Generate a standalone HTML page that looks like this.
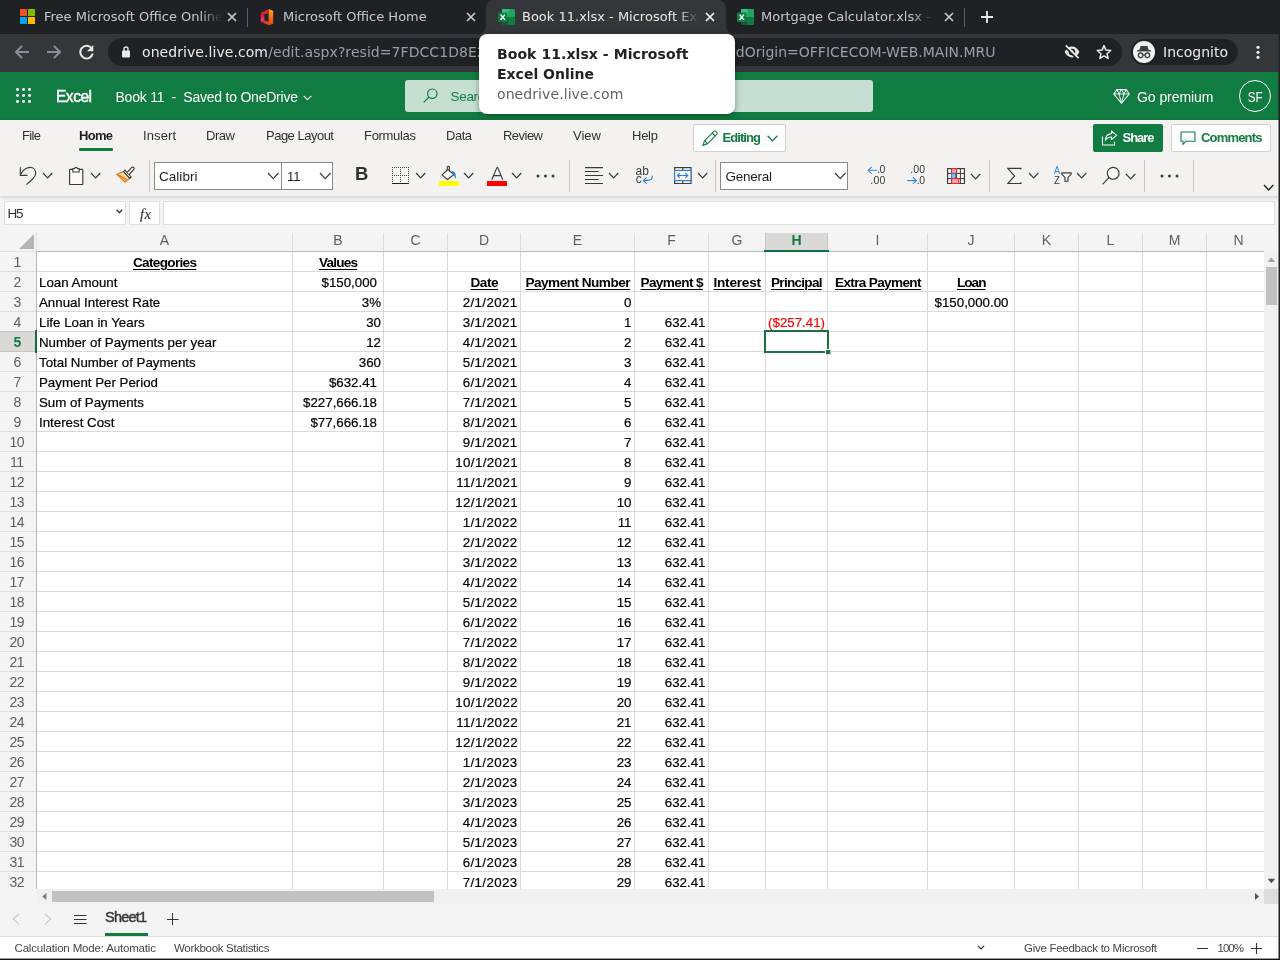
<!DOCTYPE html>
<html lang="en"><head><meta charset="utf-8"><title>Book 11.xlsx - Microsoft Excel Online</title>
<style>
html,body{margin:0;padding:0;}
body{width:1280px;height:960px;overflow:hidden;position:relative;background:#f4f4f4;font-family:"Liberation Sans",sans-serif;}
#root{position:absolute;left:0;top:0;width:1280px;height:960px;overflow:hidden;will-change:transform;}
.b{position:absolute;box-sizing:border-box;display:block;}
.t{position:absolute;white-space:pre;}
.clip{position:absolute;overflow:hidden;}
.c{-webkit-text-stroke:0.2px currentColor;}
</style></head>
<body>
<div id="root">
<div class="b" style="left:0px;top:0px;width:1280px;height:34px;background:#202124;"></div>
<div class="b" style="left:0px;top:34px;width:1280px;height:38px;background:#35363a;"></div>
<div class="b" style="left:486px;top:0px;width:240px;height:34px;background:#35363a;border-radius:8px 8px 0 0;"></div>
<svg class="b" style="left:478px;top:26px;" width="8" height="8" viewBox="0 0 8 8" fill="none"><path d="M8 0V8H0A8 8 0 0 0 8 0Z" fill="#35363a"/></svg>
<svg class="b" style="left:726px;top:26px;" width="8" height="8" viewBox="0 0 8 8" fill="none"><path d="M0 0V8H8A8 8 0 0 1 0 0Z" fill="#35363a"/></svg>
<div class="b" style="left:247px;top:8px;width:1px;height:19px;background:#5f6368;"></div>
<div class="b" style="left:964px;top:8px;width:1px;height:19px;background:#5f6368;"></div>
<div class="clip" style="left:44px;top:0;width:178px;height:34px;-webkit-mask-image:linear-gradient(to right,#000 156px,transparent 178px);mask-image:linear-gradient(to right,#000 156px,transparent 178px);">
<span class="t" style="left:0.00px;top:7.50px;font:400 13px/18px 'DejaVu Sans', 'Liberation Sans', sans-serif;color:#c6c9cc;">Free Microsoft Office Online</span>
</div>
<div class="clip" style="left:283px;top:0;width:177px;height:34px;-webkit-mask-image:linear-gradient(to right,#000 155px,transparent 177px);mask-image:linear-gradient(to right,#000 155px,transparent 177px);">
<span class="t" style="left:0.00px;top:7.50px;font:400 13px/18px 'DejaVu Sans', 'Liberation Sans', sans-serif;color:#c6c9cc;">Microsoft Office Home</span>
</div>
<div class="clip" style="left:522px;top:0;width:177px;height:34px;-webkit-mask-image:linear-gradient(to right,#000 155px,transparent 177px);mask-image:linear-gradient(to right,#000 155px,transparent 177px);">
<span class="t" style="left:0.00px;top:7.50px;font:400 13px/18px 'DejaVu Sans', 'Liberation Sans', sans-serif;color:#e8eaed;">Book 11.xlsx - Microsoft Excel Online</span>
</div>
<div class="clip" style="left:761px;top:0;width:173px;height:34px;-webkit-mask-image:linear-gradient(to right,#000 151px,transparent 173px);mask-image:linear-gradient(to right,#000 151px,transparent 173px);">
<span class="t" style="left:0.00px;top:7.50px;font:400 13px/18px 'DejaVu Sans', 'Liberation Sans', sans-serif;color:#c6c9cc;">Mortgage Calculator.xlsx - Microsoft Excel Online</span>
</div>
<svg class="b" style="left:227px;top:12px;" width="10" height="10" viewBox="0 0 10 10" fill="none"><path d="M1 1L9 9M9 1L1 9" stroke="#c6c9cc" stroke-width="1.7"/></svg>
<svg class="b" style="left:466px;top:12px;" width="10" height="10" viewBox="0 0 10 10" fill="none"><path d="M1 1L9 9M9 1L1 9" stroke="#c6c9cc" stroke-width="1.7"/></svg>
<svg class="b" style="left:705px;top:12px;" width="10" height="10" viewBox="0 0 10 10" fill="none"><path d="M1 1L9 9M9 1L1 9" stroke="#f1f3f4" stroke-width="1.7"/></svg>
<svg class="b" style="left:944px;top:12px;" width="10" height="10" viewBox="0 0 10 10" fill="none"><path d="M1 1L9 9M9 1L1 9" stroke="#c6c9cc" stroke-width="1.7"/></svg>
<svg class="b" style="left:981px;top:11px;" width="12" height="12" viewBox="0 0 12 12" fill="none"><path d="M6 0V12M0 6H12" stroke="#e8eaed" stroke-width="1.8"/></svg>
<svg class="b" style="left:20px;top:9px;" width="15" height="15" viewBox="0 0 15 15" fill="none"><rect x="0" y="0" width="7" height="7" fill="#f25022"/><rect x="8" y="0" width="7" height="7" fill="#7fba00"/><rect x="0" y="8" width="7" height="7" fill="#00a4ef"/><rect x="8" y="8" width="7" height="7" fill="#ffb900"/></svg>
<svg class="b" style="left:260px;top:8.5px;" width="14" height="17" viewBox="0 0 14 17" fill="none"><defs><linearGradient id="og1" x1="0" y1="0" x2="0" y2="1"><stop offset="0" stop-color="#ffa21f"/><stop offset="1" stop-color="#e8401c"/></linearGradient><linearGradient id="og2" x1="0" y1="0" x2="0" y2="1"><stop offset="0" stop-color="#b81a1a"/><stop offset="0.6" stop-color="#d4204a"/><stop offset="1" stop-color="#e65bb0"/></linearGradient><linearGradient id="og3" x1="0" y1="0" x2="1" y2="0"><stop offset="0" stop-color="#c4161c"/><stop offset="1" stop-color="#f0501e"/></linearGradient></defs><path d="M8.6 0.4L1.4 3.6C0.9 3.8 0.7 4.2 0.7 4.7V11.7C0.7 12.3 1 12.6 1.5 12.4L4.4 11.2V5.2L8.6 3.8Z" fill="url(#og2)"/><path d="M8.6 0.4C9 0.2 9.4 0.2 9.8 0.4L12.6 1.6C13 1.8 13.2 2.1 13.2 2.6V13.9C13.2 14.4 13 14.7 12.6 14.9L9.8 16.1C9.4 16.3 9 16.3 8.6 16.1Z" fill="url(#og1)"/><path d="M1.5 12.4C1 12.8 1.2 13.3 1.7 13.5L8.6 16.1V12.5L4.4 11.2Z" fill="url(#og3)"/><path d="M8.6 0.4L1.4 3.6L4.4 5.2L8.6 3.8Z" fill="#d9281e"/></svg>
<svg class="b" style="left:498px;top:9px;" width="17" height="16" viewBox="0 0 17 16" fill="none"><rect x="4" y="0" width="13" height="16" rx="1.2" fill="#21a366"/><rect x="4" y="0" width="6.5" height="8" fill="#33c481"/><rect x="10.5" y="8" width="6.5" height="8" fill="#107c41"/><rect x="4" y="8" width="6.5" height="8" fill="#185c37"/><rect x="0" y="3.5" width="9.5" height="9.5" rx="1" fill="#107c41"/><path d="M2.6 5.6L6.9 10.9M6.9 5.6L2.6 10.9" stroke="#fff" stroke-width="1.5"/></svg>
<svg class="b" style="left:737px;top:9px;" width="17" height="16" viewBox="0 0 17 16" fill="none"><rect x="4" y="0" width="13" height="16" rx="1.2" fill="#21a366"/><rect x="4" y="0" width="6.5" height="8" fill="#33c481"/><rect x="10.5" y="8" width="6.5" height="8" fill="#107c41"/><rect x="4" y="8" width="6.5" height="8" fill="#185c37"/><rect x="0" y="3.5" width="9.5" height="9.5" rx="1" fill="#107c41"/><path d="M2.6 5.6L6.9 10.9M6.9 5.6L2.6 10.9" stroke="#fff" stroke-width="1.5"/></svg>
<svg class="b" style="left:14px;top:45px;" width="16" height="14" viewBox="0 0 16 14" fill="none"><path d="M15 7H2M8 1L2 7L8 13" stroke="#8b8e92" stroke-width="2"/></svg>
<svg class="b" style="left:46px;top:45px;" width="16" height="14" viewBox="0 0 16 14" fill="none"><path d="M1 7H14M8 1L14 7L8 13" stroke="#8b8e92" stroke-width="2"/></svg>
<svg class="b" style="left:78px;top:44px;" width="17" height="16" viewBox="0 0 17 16" fill="none"><path d="M13.6 4.2A6.3 6.3 0 1 0 14.8 9.5" stroke="#e8eaed" stroke-width="2"/><path d="M15.3 1V7.3H9Z" fill="#e8eaed"/></svg>
<div class="b" style="left:108px;top:38px;width:1014px;height:28px;background:#202124;border-radius:14px;"></div>
<svg class="b" style="left:122px;top:45.6px;" width="8" height="12" viewBox="0 0 8 12" fill="none"><rect x="0" y="4.6" width="8" height="6.8" rx="0.8" fill="#e8eaed"/><path d="M2 5V3A2 2 0 0 1 6 3V5" stroke="#e8eaed" stroke-width="1.4"/></svg>
<div class="clip" style="left:142px;top:38px;width:340px;height:28px;">
<span class="t" style="left:0.00px;top:4.16px;font:400 14px/20px 'DejaVu Sans', 'Liberation Sans', sans-serif;color:#e8eaed;letter-spacing:0.064px;">onedrive.live.com</span>
<span class="t" style="left:126.20px;top:4.16px;font:400 14px/20px 'DejaVu Sans', 'Liberation Sans', sans-serif;color:#9a9fa5;letter-spacing:0.06px;">/edit.aspx?resid=7FDCC1D8E2A4B6F3%21121&amp;cid=7FDCC1D8E2A4B6F3</span>
</div>
<div class="clip" style="left:700px;top:38px;width:300px;height:28px;">
<span class="t" style="left:-72.62px;top:4.16px;font:400 14px/20px 'DejaVu Sans', 'Liberation Sans', sans-serif;color:#9aa0a6;">&amp;app=Excel&amp;wdOrigin=OFFICECOM-WEB.MAIN.MRU</span>
</div>
<svg class="b" style="left:1064px;top:45px;" width="16" height="14" viewBox="0 0 16 14" fill="none"><path d="M0.6 7C2.6 3.3 5.3 1.6 8 1.6S13.4 3.3 15.4 7C13.4 10.7 10.7 12.4 8 12.4S2.6 10.7 0.6 7Z" fill="#e8eaed"/><circle cx="8" cy="7" r="3.3" fill="#202124"/><circle cx="8" cy="7" r="1.7" fill="#e8eaed"/><path d="M0.8 1.6L13.4 14.2" stroke="#202124" stroke-width="2"/><path d="M1.8 0.4L14.6 13.2" stroke="#e8eaed" stroke-width="1.7"/></svg>
<svg class="b" style="left:1096px;top:44px;" width="16" height="16" viewBox="0 0 16 16" fill="none"><path d="M8 1.6L9.9 6.1L14.7 6.5L11 9.7L12.1 14.4L8 11.9L3.9 14.4L5 9.7L1.3 6.5L6.1 6.1Z" stroke="#e8eaed" stroke-width="1.5" stroke-linejoin="round"/></svg>
<div class="b" style="left:1131px;top:39px;width:107px;height:26px;background:#202124;border-radius:13px;"></div>
<svg class="b" style="left:1133px;top:41px;" width="22" height="22" viewBox="0 0 22 22" fill="none"><circle cx="11" cy="11" r="11" fill="#f1f3f4"/><path d="M6.2 9.2L7.6 4.9H14.4L15.8 9.2Z" fill="#3c4043"/><rect x="4.2" y="9" width="13.6" height="1.5" fill="#3c4043"/><circle cx="7.6" cy="14.3" r="2.3" stroke="#3c4043" stroke-width="1.3"/><circle cx="14.4" cy="14.3" r="2.3" stroke="#3c4043" stroke-width="1.3"/><path d="M9.8 14H12.2" stroke="#3c4043" stroke-width="1.2"/></svg>
<span class="t" style="left:1163.00px;top:42.16px;font:400 14px/20px 'DejaVu Sans', 'Liberation Sans', sans-serif;color:#e8eaed;">Incognito</span>
<svg class="b" style="left:1255.5px;top:45px;" width="4" height="16" viewBox="0 0 4 16" fill="none"><circle cx="2" cy="2.3" r="1.6" fill="#e8eaed"/><circle cx="2" cy="7.3" r="1.6" fill="#e8eaed"/><circle cx="2" cy="12.3" r="1.6" fill="#e8eaed"/></svg>
<div class="b" style="left:0px;top:72px;width:1280px;height:48px;background:#107c41;"></div>
<svg class="b" style="left:16px;top:88px;" width="15" height="15" viewBox="0 0 15 15" fill="none"><rect x="0" y="0" width="3" height="3" rx="1.4" fill="#fff"/><rect x="0" y="6" width="3" height="3" rx="1.4" fill="#fff"/><rect x="0" y="12" width="3" height="3" rx="1.4" fill="#fff"/><rect x="6" y="0" width="3" height="3" rx="1.4" fill="#fff"/><rect x="6" y="6" width="3" height="3" rx="1.4" fill="#fff"/><rect x="6" y="12" width="3" height="3" rx="1.4" fill="#fff"/><rect x="12" y="0" width="3" height="3" rx="1.4" fill="#fff"/><rect x="12" y="6" width="3" height="3" rx="1.4" fill="#fff"/><rect x="12" y="12" width="3" height="3" rx="1.4" fill="#fff"/></svg>
<span class="t" style="left:56.00px;top:86.19px;font:400 15.6px/22px 'Liberation Sans', sans-serif;color:#fff;letter-spacing:-0.535px;-webkit-text-stroke:0.5px #fff;">Excel</span>
<span class="t" style="left:115.50px;top:87.15px;font:400 14px/20px 'Liberation Sans', sans-serif;color:#fff;letter-spacing:-0.227px;">Book 11  -  Saved to OneDrive</span>
<svg class="b" style="left:303px;top:94.6px;" width="9" height="6" viewBox="0 0 9 6" fill="none"><path d="M0.7 0.8L4.5 4.6L8.3 0.8" stroke="#fff" stroke-width="1.1"/></svg>
<div class="b" style="left:405px;top:80px;width:468px;height:32px;background:#c6dfd2;border-radius:3px;"></div>
<svg class="b" style="left:423px;top:88px;" width="15" height="15" viewBox="0 0 15 15" fill="none"><circle cx="9.3" cy="5.7" r="4.7" stroke="#107c41" stroke-width="1.2"/><path d="M6 9L0.7 14.3" stroke="#107c41" stroke-width="1.2"/></svg>
<span class="t" style="left:450.60px;top:86.82px;font:400 13.5px/19px 'Liberation Sans', sans-serif;color:#107c41;letter-spacing:-0.35px;">Search</span>
<svg class="b" style="left:1113px;top:89px;" width="17" height="15" viewBox="0 0 17 15" fill="none"><path d="M4 0.6H13L16.3 5L8.5 14.2L0.7 5Z" stroke="#fff" stroke-width="1.1" stroke-linejoin="round"/><path d="M0.7 5H16.3M4 0.6L6 5L8.5 14.2L11 5L13 0.6M8.5 0.6L6 5M8.5 0.6L11 5" stroke="#fff" stroke-width="0.9" stroke-linejoin="round"/></svg>
<span class="t" style="left:1137.00px;top:87.15px;font:400 14px/20px 'Liberation Sans', sans-serif;color:#fff;letter-spacing:-0.059px;">Go premium</span>
<div class="b" style="left:1239px;top:80px;width:32px;height:32px;border:1px solid #fff;border-radius:16px;"></div>
<span class="t" style="left:1246.03px;top:86.98px;font:400 14.5px/20px 'Liberation Sans', sans-serif;color:#fff;transform:scaleX(0.8);">SF</span>
<div class="b" style="left:479px;top:34px;width:256px;height:80px;background:#fff;border-radius:8px;box-shadow:0 2px 6px rgba(0,0,0,0.35);"></div>
<span class="t" style="left:497.00px;top:44.16px;font:700 14px/20px 'DejaVu Sans', 'Liberation Sans', sans-serif;color:#202124;letter-spacing:0.068px;">Book 11.xlsx - Microsoft</span>
<span class="t" style="left:497.00px;top:64.16px;font:700 14px/20px 'DejaVu Sans', 'Liberation Sans', sans-serif;color:#202124;">Excel Online</span>
<span class="t" style="left:497.00px;top:84.16px;font:400 14px/20px 'DejaVu Sans', 'Liberation Sans', sans-serif;color:#5f6368;letter-spacing:0.083px;">onedrive.live.com</span>
<div class="b" style="left:0px;top:120px;width:1280px;height:76px;background:#f3f2f1;box-shadow:0 1px 4px rgba(0,0,0,0.18);"></div>
<span class="t" style="left:22.00px;top:126.50px;font:400 13px/18px 'Liberation Sans', sans-serif;color:#323130;letter-spacing:-0.651px;">File</span>
<span class="t" style="left:79.00px;top:126.50px;font:700 13px/18px 'Liberation Sans', sans-serif;color:#201f1e;letter-spacing:-0.708px;">Home</span>
<span class="t" style="left:143.00px;top:126.50px;font:400 13px/18px 'Liberation Sans', sans-serif;color:#323130;letter-spacing:0.097px;">Insert</span>
<span class="t" style="left:206.00px;top:126.50px;font:400 13px/18px 'Liberation Sans', sans-serif;color:#323130;letter-spacing:-0.448px;">Draw</span>
<span class="t" style="left:266.00px;top:126.50px;font:400 13px/18px 'Liberation Sans', sans-serif;color:#323130;letter-spacing:-0.502px;">Page Layout</span>
<span class="t" style="left:364.00px;top:126.50px;font:400 13px/18px 'Liberation Sans', sans-serif;color:#323130;letter-spacing:-0.312px;">Formulas</span>
<span class="t" style="left:446.00px;top:126.50px;font:400 13px/18px 'Liberation Sans', sans-serif;color:#323130;letter-spacing:-0.490px;">Data</span>
<span class="t" style="left:503.00px;top:126.50px;font:400 13px/18px 'Liberation Sans', sans-serif;color:#323130;letter-spacing:-0.525px;">Review</span>
<span class="t" style="left:573.00px;top:126.50px;font:400 13px/18px 'Liberation Sans', sans-serif;color:#323130;letter-spacing:0.016px;">View</span>
<span class="t" style="left:632.00px;top:126.50px;font:400 13px/18px 'Liberation Sans', sans-serif;color:#323130;letter-spacing:-0.250px;">Help</span>
<div class="b" style="left:79px;top:148px;width:34px;height:3px;background:#107c41;border-radius:1px;"></div>
<div class="b" style="left:693px;top:124px;width:93px;height:28px;background:#fff;border:1px solid #d2d0ce;border-radius:2px;"></div>
<svg class="b" style="left:701px;top:130px;" width="18" height="17" viewBox="0 0 18 17" fill="none"><path d="M2.2 15L3.4 10.8L12.6 1.6A1.6 1.6 0 0 1 15 1.6L15.6 2.2A1.6 1.6 0 0 1 15.6 4.6L6.4 13.8Z" stroke="#107c41" stroke-width="1.1" stroke-linejoin="round"/><path d="M11.2 3L14.2 6M3.6 10.6L6.6 13.6M1 15.6L6 14" stroke="#107c41" stroke-width="1.1"/></svg>
<span class="t" style="left:722.50px;top:128.50px;font:700 13px/18px 'Liberation Sans', sans-serif;color:#107c41;letter-spacing:-0.924px;">Editing</span>
<svg class="b" style="left:767px;top:135px;" width="12" height="8" viewBox="0 0 12 8" fill="none"><path d="M0.6 0.7L5.5 5.9L10.4 0.7" stroke="#107c41" stroke-width="1.3"/></svg>
<div class="b" style="left:1093px;top:124px;width:70px;height:28px;background:#107c41;border-radius:2px;"></div>
<svg class="b" style="left:1101px;top:130px;" width="18" height="16" viewBox="0 0 18 16" fill="none"><path d="M1.5 6.5V15H13.5V11.5" stroke="#fff" stroke-width="1.1"/><path d="M10.5 1L15.5 5.3L10.5 9.6V7C7.5 7 5.7 8 4.3 10.3C4.6 6.7 6.6 4 10.5 3.6Z" stroke="#fff" stroke-width="1.1" stroke-linejoin="round"/></svg>
<span class="t" style="left:1122.50px;top:128.50px;font:700 13px/18px 'Liberation Sans', sans-serif;color:#fff;letter-spacing:-1.035px;">Share</span>
<div class="b" style="left:1171px;top:124px;width:100px;height:28px;background:#fff;border:1px solid #d2d0ce;border-radius:2px;"></div>
<svg class="b" style="left:1180px;top:131px;" width="16" height="15" viewBox="0 0 16 15" fill="none"><path d="M1 1H15V10.2H6L3 13.4V10.2H1Z" stroke="#107c41" stroke-width="1.1" stroke-linejoin="round"/></svg>
<span class="t" style="left:1201.00px;top:128.50px;font:700 13px/18px 'Liberation Sans', sans-serif;color:#107c41;letter-spacing:-0.812px;">Comments</span>
<svg class="b" style="left:19px;top:166px;" width="19" height="20" viewBox="0 0 19 20" fill="none"><path d="M1.35 1.3V9.3H8.5" stroke="#3b3a39" stroke-width="1.15"/><path d="M1.3 8.7C4 4 7.8 1.3 11.2 1.3C14.5 1.3 16.7 4 16.7 7.3C16.7 10 15.2 11.4 13.6 13L7.4 18.6" stroke="#3b3a39" stroke-width="1.15"/></svg>
<svg class="b" style="left:41.8px;top:171.8px;" width="11.3" height="7.9" viewBox="0 0 11.3 7.9" fill="none"><path d="M1 1L5.65 6.00L10.30 1" stroke="#3b3a39" stroke-width="1.15"/></svg>
<svg class="b" style="left:68px;top:166px;" width="16" height="20" viewBox="0 0 16 20" fill="none"><rect x="1.6" y="3.3" width="13.2" height="15.2" rx="0.6" fill="#faf9f8" stroke="#3b3a39" stroke-width="1.15"/><path d="M4.8 6V2.6H6.6C6.8 1 9.2 1 9.4 2.6H11.2V6Z" fill="#faf9f8" stroke="#3b3a39" stroke-width="1.1" stroke-linejoin="round"/></svg>
<svg class="b" style="left:90px;top:171.8px;" width="11.3" height="7.9" viewBox="0 0 11.3 7.9" fill="none"><path d="M1 1L5.65 6.00L10.30 1" stroke="#3b3a39" stroke-width="1.15"/></svg>
<svg class="b" style="left:115px;top:165px;" width="21" height="19" viewBox="0 0 21 19" fill="none"><path d="M1.8 9.3L8.8 6.6L14.8 13.2L9.9 17Z" fill="#fbd9a8" stroke="#e8710a" stroke-width="1.1" stroke-linejoin="round"/><path d="M4.5 10.5L11 15.5M3 9.6L12.6 14.6" stroke="#e8710a" stroke-width="0.9"/><path d="M8.6 6.6L10 5.2L16.2 12L14.8 13.4Z" fill="#f3f2f1" stroke="#3b3a39" stroke-width="1.1" stroke-linejoin="round"/><path d="M12.2 7.4L16.6 2.6C17.3 1.9 18.4 2 18.9 2.6C19.4 3.2 19.3 4.1 18.7 4.7L14.2 9.5" fill="#f3f2f1" stroke="#3b3a39" stroke-width="1.1" stroke-linejoin="round"/></svg>
<div class="b" style="left:149px;top:160px;width:1px;height:32px;background:#c8c6c4;"></div>
<div class="b" style="left:154px;top:162px;width:128px;height:28px;background:#fff;border:1px solid #8a8886;border-right:none;"></div>
<div class="b" style="left:281px;top:162px;width:52px;height:28px;background:#fff;border:1px solid #8a8886;"></div>
<span class="t" style="left:159.00px;top:166.82px;font:400 13.5px/19px 'Liberation Sans', sans-serif;color:#201f1e;letter-spacing:0.039px;">Calibri</span>
<svg class="b" style="left:266.5px;top:172.3px;" width="12.5" height="8.5" viewBox="0 0 12.5 8.5" fill="none"><path d="M1 1L6.25 6.60L11.50 1" stroke="#3b3a39" stroke-width="1.15"/></svg>
<span class="t" style="left:287.00px;top:167.50px;font:400 13px/18px 'Liberation Sans', sans-serif;color:#201f1e;">11</span>
<svg class="b" style="left:318.5px;top:172.3px;" width="12.5" height="8.5" viewBox="0 0 12.5 8.5" fill="none"><path d="M1 1L6.25 6.60L11.50 1" stroke="#3b3a39" stroke-width="1.15"/></svg>
<span class="t" style="left:355.00px;top:161.09px;font:700 18.5px/26px 'Liberation Sans', sans-serif;color:#323130;">B</span>
<svg class="b" style="left:392px;top:167px;" width="17" height="17" viewBox="0 0 17 17" fill="none"><rect x="0" y="0" width="17" height="16" fill="#faf9f8"/><rect x="0" y="0" width="1" height="1" fill="#3b3a39"/><rect x="0" y="2" width="1" height="1" fill="#3b3a39"/><rect x="0" y="4" width="1" height="1" fill="#3b3a39"/><rect x="0" y="6" width="1" height="1" fill="#3b3a39"/><rect x="0" y="8" width="1" height="1" fill="#3b3a39"/><rect x="0" y="10" width="1" height="1" fill="#3b3a39"/><rect x="0" y="12" width="1" height="1" fill="#3b3a39"/><rect x="0" y="14" width="1" height="1" fill="#3b3a39"/><rect x="8" y="0" width="1" height="1" fill="#3b3a39"/><rect x="8" y="2" width="1" height="1" fill="#3b3a39"/><rect x="8" y="4" width="1" height="1" fill="#3b3a39"/><rect x="8" y="6" width="1" height="1" fill="#3b3a39"/><rect x="8" y="8" width="1" height="1" fill="#3b3a39"/><rect x="8" y="10" width="1" height="1" fill="#3b3a39"/><rect x="8" y="12" width="1" height="1" fill="#3b3a39"/><rect x="8" y="14" width="1" height="1" fill="#3b3a39"/><rect x="16" y="0" width="1" height="1" fill="#3b3a39"/><rect x="16" y="2" width="1" height="1" fill="#3b3a39"/><rect x="16" y="4" width="1" height="1" fill="#3b3a39"/><rect x="16" y="6" width="1" height="1" fill="#3b3a39"/><rect x="16" y="8" width="1" height="1" fill="#3b3a39"/><rect x="16" y="10" width="1" height="1" fill="#3b3a39"/><rect x="16" y="12" width="1" height="1" fill="#3b3a39"/><rect x="16" y="14" width="1" height="1" fill="#3b3a39"/><rect x="0" y="0" width="1" height="1" fill="#3b3a39"/><rect x="2" y="0" width="1" height="1" fill="#3b3a39"/><rect x="4" y="0" width="1" height="1" fill="#3b3a39"/><rect x="6" y="0" width="1" height="1" fill="#3b3a39"/><rect x="8" y="0" width="1" height="1" fill="#3b3a39"/><rect x="10" y="0" width="1" height="1" fill="#3b3a39"/><rect x="12" y="0" width="1" height="1" fill="#3b3a39"/><rect x="14" y="0" width="1" height="1" fill="#3b3a39"/><rect x="16" y="0" width="1" height="1" fill="#3b3a39"/><rect x="0" y="8" width="1" height="1" fill="#3b3a39"/><rect x="2" y="8" width="1" height="1" fill="#3b3a39"/><rect x="4" y="8" width="1" height="1" fill="#3b3a39"/><rect x="6" y="8" width="1" height="1" fill="#3b3a39"/><rect x="8" y="8" width="1" height="1" fill="#3b3a39"/><rect x="10" y="8" width="1" height="1" fill="#3b3a39"/><rect x="12" y="8" width="1" height="1" fill="#3b3a39"/><rect x="14" y="8" width="1" height="1" fill="#3b3a39"/><rect x="16" y="8" width="1" height="1" fill="#3b3a39"/><rect x="0" y="16" width="17" height="1.2" fill="#201f1e"/></svg>
<svg class="b" style="left:415px;top:171.8px;" width="11.3" height="7.9" viewBox="0 0 11.3 7.9" fill="none"><path d="M1 1L5.65 6.00L10.30 1" stroke="#3b3a39" stroke-width="1.15"/></svg>
<svg class="b" style="left:440px;top:165px;" width="18" height="16" viewBox="0 0 18 16" fill="none"><path d="M7.2 6.2V2.8C7.2 0.9 9.4 0.9 9.4 2.8V6" stroke="#3b3a39" stroke-width="1.1"/><path d="M7.9 4.5L14 9.6L7.4 14.5L2 9.9Z" fill="#faf9f8" stroke="#3b3a39" stroke-width="1.15" stroke-linejoin="round"/><path d="M12.2 6.6C14.6 6.2 15.8 9.4 15.5 13.2C14.8 11 14.2 9.8 13 8.6Z" fill="#2b7cd3" stroke="#2b7cd3" stroke-width="0.7" stroke-linejoin="round"/></svg>
<div class="b" style="left:439px;top:181px;width:20px;height:5px;background:#ffff00;"></div>
<svg class="b" style="left:463px;top:171.8px;" width="11.3" height="7.9" viewBox="0 0 11.3 7.9" fill="none"><path d="M1 1L5.65 6.00L10.30 1" stroke="#3b3a39" stroke-width="1.15"/></svg>
<svg class="b" style="left:491px;top:167px;" width="13" height="13" viewBox="0 0 13 13" fill="none"><path d="M0.8 12.8L5.9 0.6H6.7L11.8 12.8M2.6 8.6H10" stroke="#3b3a39" stroke-width="1.15" stroke-linejoin="round"/></svg>
<div class="b" style="left:487px;top:181px;width:20px;height:5px;background:#ff0000;"></div>
<svg class="b" style="left:511px;top:171.8px;" width="11.3" height="7.9" viewBox="0 0 11.3 7.9" fill="none"><path d="M1 1L5.65 6.00L10.30 1" stroke="#3b3a39" stroke-width="1.15"/></svg>
<svg class="b" style="left:535.5px;top:173.5px;" width="19" height="4" viewBox="0 0 19 4" fill="none"><circle cx="2" cy="2" r="1.5" fill="#3b3a39"/><circle cx="9.5" cy="2" r="1.5" fill="#3b3a39"/><circle cx="17" cy="2" r="1.5" fill="#3b3a39"/></svg>
<div class="b" style="left:569px;top:160px;width:1px;height:32px;background:#c8c6c4;"></div>
<svg class="b" style="left:585px;top:167px;" width="18" height="17" viewBox="0 0 18 17" fill="none"><path d="M0 0.6H18M0 4.5H13.5M0 8.5H18M0 12.5H13.5M0 16.5H18" stroke="#3b3a39" stroke-width="1.1"/></svg>
<svg class="b" style="left:608px;top:171.8px;" width="11.3" height="7.9" viewBox="0 0 11.3 7.9" fill="none"><path d="M1 1L5.65 6.00L10.30 1" stroke="#3b3a39" stroke-width="1.15"/></svg>
<span class="t" style="left:635.50px;top:162.64px;font:400 12px/17px 'Liberation Sans', sans-serif;color:#3b3a39;letter-spacing:0.141px;">ab</span>
<span class="t" style="left:635.70px;top:170.74px;font:400 12px/17px 'Liberation Sans', sans-serif;color:#3b3a39;">c</span>
<svg class="b" style="left:642px;top:174px;" width="12" height="11" viewBox="0 0 12 11" fill="none"><path d="M10.2 1.6C10.8 4.6 8.6 6.4 5.6 6.4H1.6" stroke="#2b7cd3" stroke-width="1.15"/><path d="M4.6 3.4L1.4 6.4L4.6 9.6" stroke="#2b7cd3" stroke-width="1.15"/></svg>
<svg class="b" style="left:674px;top:167px;" width="18" height="17" viewBox="0 0 18 17" fill="none"><rect x="0.6" y="0.6" width="16.4" height="16" stroke="#3b3a39" stroke-width="1.15"/><path d="M8.8 0.6V3.4M8.8 13.6V16.6" stroke="#3b3a39" stroke-width="1.15"/><rect x="0.6" y="3.4" width="16.4" height="10.2" fill="#faf9f8" stroke="#2b7cd3" stroke-width="1.15"/><path d="M3.4 8.5H13.8M5.8 6.1L3.4 8.5L5.8 10.9M11.4 6.1L13.8 8.5L11.4 10.9" stroke="#2b7cd3" stroke-width="1.15"/></svg>
<svg class="b" style="left:697px;top:171.8px;" width="11.3" height="7.9" viewBox="0 0 11.3 7.9" fill="none"><path d="M1 1L5.65 6.00L10.30 1" stroke="#3b3a39" stroke-width="1.15"/></svg>
<div class="b" style="left:715px;top:160px;width:1px;height:32px;background:#c8c6c4;"></div>
<div class="b" style="left:720px;top:162px;width:128px;height:28px;background:#fff;border:1px solid #8a8886;"></div>
<span class="t" style="left:725.50px;top:166.82px;font:400 13.5px/19px 'Liberation Sans', sans-serif;color:#201f1e;letter-spacing:-0.255px;">General</span>
<svg class="b" style="left:833.5px;top:172.3px;" width="12.5" height="8.5" viewBox="0 0 12.5 8.5" fill="none"><path d="M1 1L6.25 6.60L11.50 1" stroke="#3b3a39" stroke-width="1.15"/></svg>
<span class="t" style="left:877.30px;top:162.26px;font:400 10.5px/15px 'Liberation Sans', sans-serif;color:#3b3a39;letter-spacing:-0.666px;">.0</span>
<span class="t" style="left:870.20px;top:172.66px;font:400 10.5px/15px 'Liberation Sans', sans-serif;color:#3b3a39;letter-spacing:0.295px;">.00</span>
<svg class="b" style="left:867px;top:166px;" width="11" height="9" viewBox="0 0 11 9" fill="none"><path d="M10.5 4.3H1.2M4.6 0.9L1.2 4.3L4.6 7.7" stroke="#2f88d8" stroke-width="1.05"/></svg>
<span class="t" style="left:910.30px;top:162.26px;font:400 10.5px/15px 'Liberation Sans', sans-serif;color:#3b3a39;letter-spacing:0.145px;">.00</span>
<span class="t" style="left:916.80px;top:172.66px;font:400 10.5px/15px 'Liberation Sans', sans-serif;color:#3b3a39;letter-spacing:-0.366px;">.0</span>
<svg class="b" style="left:906px;top:176px;" width="11" height="9" viewBox="0 0 11 9" fill="none"><path d="M1.2 4.6H10.3M6.9 1.2L10.3 4.6L6.9 8" stroke="#2f88d8" stroke-width="1.05"/></svg>
<svg class="b" style="left:947px;top:168px;" width="18" height="16" viewBox="0 0 18 16" fill="none"><rect x="0.6" y="0.6" width="16.8" height="15" fill="#faf9f8" stroke="#3b3a39" stroke-width="1.15"/><path d="M4.6 0.6V15.6M9.6 0.6V15.6M13.4 0.6V15.6M0.6 5.4H17.4M0.6 10.6H17.4" stroke="#3b3a39" stroke-width="1"/><rect x="4.6" y="0.6" width="5" height="4.8" fill="#f7a3ab" stroke="#e3262f" stroke-width="1"/><rect x="4.6" y="5.6" width="3.8" height="4.8" fill="#8cc3f0" stroke="#2b7cd3" stroke-width="1"/><rect x="4.6" y="10.6" width="7.2" height="5" fill="#f7a3ab" stroke="#e3262f" stroke-width="1"/></svg>
<svg class="b" style="left:970px;top:172.6px;" width="11.3" height="7.9" viewBox="0 0 11.3 7.9" fill="none"><path d="M1 1L5.65 6.00L10.30 1" stroke="#3b3a39" stroke-width="1.15"/></svg>
<div class="b" style="left:989px;top:160px;width:1px;height:32px;background:#c8c6c4;"></div>
<svg class="b" style="left:1007px;top:167px;" width="15" height="18" viewBox="0 0 15 18" fill="none"><path d="M14 2.6V1.3H0.8L7.6 9L0.8 16.5H14V15.2" stroke="#3b3a39" stroke-width="1.15" stroke-linejoin="miter"/></svg>
<svg class="b" style="left:1028px;top:171.8px;" width="11.3" height="7.9" viewBox="0 0 11.3 7.9" fill="none"><path d="M1 1L5.65 6.00L10.30 1" stroke="#3b3a39" stroke-width="1.15"/></svg>
<span class="t" style="left:1053.60px;top:163.26px;font:400 10.5px/15px 'Liberation Sans', sans-serif;color:#2f88d8;transform:scaleX(0.88);transform-origin:left;">A</span>
<span class="t" style="left:1054.00px;top:173.46px;font:400 10.5px/15px 'Liberation Sans', sans-serif;color:#3b3a39;transform:scaleX(0.92);transform-origin:left;">Z</span>
<svg class="b" style="left:1061px;top:172px;" width="11" height="10" viewBox="0 0 11 10" fill="none"><path d="M0.8 0.8H10.2V2.2L7 5.4V9.2H4V5.4L0.8 2.2Z" fill="#faf9f8" stroke="#3b3a39" stroke-width="1.15" stroke-linejoin="round"/></svg>
<svg class="b" style="left:1076px;top:171.8px;" width="11.3" height="7.9" viewBox="0 0 11.3 7.9" fill="none"><path d="M1 1L5.65 6.00L10.30 1" stroke="#3b3a39" stroke-width="1.15"/></svg>
<svg class="b" style="left:1102px;top:166px;" width="19" height="20" viewBox="0 0 19 20" fill="none"><circle cx="11.2" cy="7.3" r="5.9" fill="#faf9f8" stroke="#3b3a39" stroke-width="1.15"/><path d="M6.9 11.6L0.6 18.4" stroke="#3b3a39" stroke-width="1.15"/></svg>
<svg class="b" style="left:1125px;top:172.6px;" width="11.3" height="7.9" viewBox="0 0 11.3 7.9" fill="none"><path d="M1 1L5.65 6.00L10.30 1" stroke="#3b3a39" stroke-width="1.15"/></svg>
<div class="b" style="left:1144px;top:160px;width:1px;height:32px;background:#c8c6c4;"></div>
<svg class="b" style="left:1159.5px;top:173.5px;" width="19" height="4" viewBox="0 0 19 4" fill="none"><circle cx="2" cy="2" r="1.5" fill="#3b3a39"/><circle cx="9.5" cy="2" r="1.5" fill="#3b3a39"/><circle cx="17" cy="2" r="1.5" fill="#3b3a39"/></svg>
<div class="b" style="left:1193px;top:160px;width:1px;height:32px;background:#c8c6c4;"></div>
<svg class="b" style="left:1263px;top:184.3px;" width="11.3" height="7.9" viewBox="0 0 11.3 7.9" fill="none"><path d="M1 1L5.65 6.00L10.30 1" stroke="#201f1e" stroke-width="1.4"/></svg>
<div class="b" style="left:4px;top:201px;width:122px;height:24px;background:#fff;border:1px solid #e1dfdd;"></div>
<div class="b" style="left:129px;top:201px;width:31px;height:24px;background:#fff;border:1px solid #e1dfdd;"></div>
<div class="b" style="left:163px;top:201px;width:1112px;height:24px;background:#fff;border:1px solid #e1dfdd;"></div>
<span class="t" style="left:7.50px;top:203.82px;font:400 13.5px/19px 'Liberation Sans', sans-serif;color:#323130;letter-spacing:-1.200px;">H5</span>
<svg class="b" style="left:116px;top:209px;" width="7" height="5" viewBox="0 0 7 5" fill="none"><path d="M0.6 0.7L3.4 3.7L6.2 0.7" stroke="#3b3a39" stroke-width="1.4"/></svg>
<span class="t" style="left:140.00px;top:204.11px;font:italic 400 14.5px/20px 'Liberation Serif', serif;color:#323130;-webkit-text-stroke:0.15px #323130;letter-spacing:0.4px;">fx</span>
<div class="b" style="left:37px;top:252px;width:1227px;height:637px;background:#fff;"></div>
<div class="b" style="left:0px;top:251px;width:36px;height:1px;background:#e2e2e2;"></div>
<div class="b" style="left:36px;top:251px;width:1228px;height:1px;background:#b7b7b7;"></div>
<div class="b" style="left:36px;top:233px;width:1px;height:18px;background:#e2e2e2;"></div>
<div class="b" style="left:36px;top:252px;width:1px;height:637px;background:#b7b7b7;"></div>
<div class="b" style="left:0px;top:271px;width:36px;height:1px;background:#dedede;"></div>
<div class="b" style="left:37px;top:271px;width:1227px;height:1px;background:#d9d9d9;"></div>
<div class="b" style="left:0px;top:291px;width:36px;height:1px;background:#dedede;"></div>
<div class="b" style="left:37px;top:291px;width:1227px;height:1px;background:#d9d9d9;"></div>
<div class="b" style="left:0px;top:311px;width:36px;height:1px;background:#dedede;"></div>
<div class="b" style="left:37px;top:311px;width:1227px;height:1px;background:#d9d9d9;"></div>
<div class="b" style="left:0px;top:331px;width:36px;height:1px;background:#dedede;"></div>
<div class="b" style="left:37px;top:331px;width:1227px;height:1px;background:#d9d9d9;"></div>
<div class="b" style="left:0px;top:351px;width:36px;height:1px;background:#dedede;"></div>
<div class="b" style="left:37px;top:351px;width:1227px;height:1px;background:#d9d9d9;"></div>
<div class="b" style="left:0px;top:371px;width:36px;height:1px;background:#dedede;"></div>
<div class="b" style="left:37px;top:371px;width:1227px;height:1px;background:#d9d9d9;"></div>
<div class="b" style="left:0px;top:391px;width:36px;height:1px;background:#dedede;"></div>
<div class="b" style="left:37px;top:391px;width:1227px;height:1px;background:#d9d9d9;"></div>
<div class="b" style="left:0px;top:411px;width:36px;height:1px;background:#dedede;"></div>
<div class="b" style="left:37px;top:411px;width:1227px;height:1px;background:#d9d9d9;"></div>
<div class="b" style="left:0px;top:431px;width:36px;height:1px;background:#dedede;"></div>
<div class="b" style="left:37px;top:431px;width:1227px;height:1px;background:#d9d9d9;"></div>
<div class="b" style="left:0px;top:451px;width:36px;height:1px;background:#dedede;"></div>
<div class="b" style="left:37px;top:451px;width:1227px;height:1px;background:#d9d9d9;"></div>
<div class="b" style="left:0px;top:471px;width:36px;height:1px;background:#dedede;"></div>
<div class="b" style="left:37px;top:471px;width:1227px;height:1px;background:#d9d9d9;"></div>
<div class="b" style="left:0px;top:491px;width:36px;height:1px;background:#dedede;"></div>
<div class="b" style="left:37px;top:491px;width:1227px;height:1px;background:#d9d9d9;"></div>
<div class="b" style="left:0px;top:511px;width:36px;height:1px;background:#dedede;"></div>
<div class="b" style="left:37px;top:511px;width:1227px;height:1px;background:#d9d9d9;"></div>
<div class="b" style="left:0px;top:531px;width:36px;height:1px;background:#dedede;"></div>
<div class="b" style="left:37px;top:531px;width:1227px;height:1px;background:#d9d9d9;"></div>
<div class="b" style="left:0px;top:551px;width:36px;height:1px;background:#dedede;"></div>
<div class="b" style="left:37px;top:551px;width:1227px;height:1px;background:#d9d9d9;"></div>
<div class="b" style="left:0px;top:571px;width:36px;height:1px;background:#dedede;"></div>
<div class="b" style="left:37px;top:571px;width:1227px;height:1px;background:#d9d9d9;"></div>
<div class="b" style="left:0px;top:591px;width:36px;height:1px;background:#dedede;"></div>
<div class="b" style="left:37px;top:591px;width:1227px;height:1px;background:#d9d9d9;"></div>
<div class="b" style="left:0px;top:611px;width:36px;height:1px;background:#dedede;"></div>
<div class="b" style="left:37px;top:611px;width:1227px;height:1px;background:#d9d9d9;"></div>
<div class="b" style="left:0px;top:631px;width:36px;height:1px;background:#dedede;"></div>
<div class="b" style="left:37px;top:631px;width:1227px;height:1px;background:#d9d9d9;"></div>
<div class="b" style="left:0px;top:651px;width:36px;height:1px;background:#dedede;"></div>
<div class="b" style="left:37px;top:651px;width:1227px;height:1px;background:#d9d9d9;"></div>
<div class="b" style="left:0px;top:671px;width:36px;height:1px;background:#dedede;"></div>
<div class="b" style="left:37px;top:671px;width:1227px;height:1px;background:#d9d9d9;"></div>
<div class="b" style="left:0px;top:691px;width:36px;height:1px;background:#dedede;"></div>
<div class="b" style="left:37px;top:691px;width:1227px;height:1px;background:#d9d9d9;"></div>
<div class="b" style="left:0px;top:711px;width:36px;height:1px;background:#dedede;"></div>
<div class="b" style="left:37px;top:711px;width:1227px;height:1px;background:#d9d9d9;"></div>
<div class="b" style="left:0px;top:731px;width:36px;height:1px;background:#dedede;"></div>
<div class="b" style="left:37px;top:731px;width:1227px;height:1px;background:#d9d9d9;"></div>
<div class="b" style="left:0px;top:751px;width:36px;height:1px;background:#dedede;"></div>
<div class="b" style="left:37px;top:751px;width:1227px;height:1px;background:#d9d9d9;"></div>
<div class="b" style="left:0px;top:771px;width:36px;height:1px;background:#dedede;"></div>
<div class="b" style="left:37px;top:771px;width:1227px;height:1px;background:#d9d9d9;"></div>
<div class="b" style="left:0px;top:791px;width:36px;height:1px;background:#dedede;"></div>
<div class="b" style="left:37px;top:791px;width:1227px;height:1px;background:#d9d9d9;"></div>
<div class="b" style="left:0px;top:811px;width:36px;height:1px;background:#dedede;"></div>
<div class="b" style="left:37px;top:811px;width:1227px;height:1px;background:#d9d9d9;"></div>
<div class="b" style="left:0px;top:831px;width:36px;height:1px;background:#dedede;"></div>
<div class="b" style="left:37px;top:831px;width:1227px;height:1px;background:#d9d9d9;"></div>
<div class="b" style="left:0px;top:851px;width:36px;height:1px;background:#dedede;"></div>
<div class="b" style="left:37px;top:851px;width:1227px;height:1px;background:#d9d9d9;"></div>
<div class="b" style="left:0px;top:871px;width:36px;height:1px;background:#dedede;"></div>
<div class="b" style="left:37px;top:871px;width:1227px;height:1px;background:#d9d9d9;"></div>
<div class="b" style="left:292px;top:252px;width:1px;height:637px;background:#d9d9d9;"></div>
<div class="b" style="left:292px;top:233px;width:1px;height:18px;background:#dddbd9;"></div>
<div class="b" style="left:383px;top:252px;width:1px;height:637px;background:#d9d9d9;"></div>
<div class="b" style="left:383px;top:233px;width:1px;height:18px;background:#dddbd9;"></div>
<div class="b" style="left:447px;top:252px;width:1px;height:637px;background:#d9d9d9;"></div>
<div class="b" style="left:447px;top:233px;width:1px;height:18px;background:#dddbd9;"></div>
<div class="b" style="left:520px;top:252px;width:1px;height:637px;background:#d9d9d9;"></div>
<div class="b" style="left:520px;top:233px;width:1px;height:18px;background:#dddbd9;"></div>
<div class="b" style="left:634px;top:252px;width:1px;height:637px;background:#d9d9d9;"></div>
<div class="b" style="left:634px;top:233px;width:1px;height:18px;background:#dddbd9;"></div>
<div class="b" style="left:708px;top:252px;width:1px;height:637px;background:#d9d9d9;"></div>
<div class="b" style="left:708px;top:233px;width:1px;height:18px;background:#dddbd9;"></div>
<div class="b" style="left:765px;top:252px;width:1px;height:637px;background:#d9d9d9;"></div>
<div class="b" style="left:765px;top:233px;width:1px;height:18px;background:#dddbd9;"></div>
<div class="b" style="left:827px;top:252px;width:1px;height:637px;background:#d9d9d9;"></div>
<div class="b" style="left:827px;top:233px;width:1px;height:18px;background:#dddbd9;"></div>
<div class="b" style="left:927px;top:252px;width:1px;height:637px;background:#d9d9d9;"></div>
<div class="b" style="left:927px;top:233px;width:1px;height:18px;background:#dddbd9;"></div>
<div class="b" style="left:1014px;top:252px;width:1px;height:637px;background:#d9d9d9;"></div>
<div class="b" style="left:1014px;top:233px;width:1px;height:18px;background:#dddbd9;"></div>
<div class="b" style="left:1078px;top:252px;width:1px;height:637px;background:#d9d9d9;"></div>
<div class="b" style="left:1078px;top:233px;width:1px;height:18px;background:#dddbd9;"></div>
<div class="b" style="left:1142px;top:252px;width:1px;height:637px;background:#d9d9d9;"></div>
<div class="b" style="left:1142px;top:233px;width:1px;height:18px;background:#dddbd9;"></div>
<div class="b" style="left:1206px;top:252px;width:1px;height:637px;background:#d9d9d9;"></div>
<div class="b" style="left:1206px;top:233px;width:1px;height:18px;background:#dddbd9;"></div>
<svg class="b" style="left:19px;top:234px;" width="15" height="15" viewBox="0 0 15 15" fill="none"><path d="M15 0V15H0Z" fill="#b5b5b5"/></svg>
<div class="b" style="left:765px;top:233px;width:63px;height:18px;background:#dbd9d7;border-left:1px solid #c6c4c2;border-right:1px solid #c6c4c2;"></div>
<div class="b" style="left:764px;top:250px;width:65px;height:2px;background:#0f703b;"></div>
<div class="b" style="left:0px;top:331px;width:36px;height:21px;background:#dbd9d7;border-top:1px solid #c6c4c2;border-bottom:1px solid #c6c4c2;"></div>
<div class="b" style="left:35px;top:330px;width:2px;height:23px;background:#0f703b;"></div>
<span class="t" style="left:159.83px;top:230.15px;font:400 14px/20px 'Liberation Sans', sans-serif;color:#5e5e5e;">A</span>
<span class="t" style="left:333.33px;top:230.15px;font:400 14px/20px 'Liberation Sans', sans-serif;color:#5e5e5e;">B</span>
<span class="t" style="left:410.44px;top:230.15px;font:400 14px/20px 'Liberation Sans', sans-serif;color:#5e5e5e;">C</span>
<span class="t" style="left:478.94px;top:230.15px;font:400 14px/20px 'Liberation Sans', sans-serif;color:#5e5e5e;">D</span>
<span class="t" style="left:572.83px;top:230.15px;font:400 14px/20px 'Liberation Sans', sans-serif;color:#5e5e5e;">E</span>
<span class="t" style="left:667.22px;top:230.15px;font:400 14px/20px 'Liberation Sans', sans-serif;color:#5e5e5e;">F</span>
<span class="t" style="left:731.55px;top:230.15px;font:400 14px/20px 'Liberation Sans', sans-serif;color:#5e5e5e;">G</span>
<span class="t" style="left:791.44px;top:230.15px;font:700 14px/20px 'Liberation Sans', sans-serif;color:#107c41;">H</span>
<span class="t" style="left:875.55px;top:230.15px;font:400 14px/20px 'Liberation Sans', sans-serif;color:#5e5e5e;">I</span>
<span class="t" style="left:967.50px;top:230.15px;font:400 14px/20px 'Liberation Sans', sans-serif;color:#5e5e5e;">J</span>
<span class="t" style="left:1041.83px;top:230.15px;font:400 14px/20px 'Liberation Sans', sans-serif;color:#5e5e5e;">K</span>
<span class="t" style="left:1106.60px;top:230.15px;font:400 14px/20px 'Liberation Sans', sans-serif;color:#5e5e5e;">L</span>
<span class="t" style="left:1168.66px;top:230.15px;font:400 14px/20px 'Liberation Sans', sans-serif;color:#5e5e5e;">M</span>
<span class="t" style="left:1233.44px;top:230.15px;font:400 14px/20px 'Liberation Sans', sans-serif;color:#5e5e5e;">N</span>
<span class="t" style="left:13.40px;top:252.15px;font:400 14px/20px 'Liberation Sans', sans-serif;color:#5e5e5e;">1</span>
<span class="t" style="left:13.40px;top:272.15px;font:400 14px/20px 'Liberation Sans', sans-serif;color:#5e5e5e;">2</span>
<span class="t" style="left:13.40px;top:292.15px;font:400 14px/20px 'Liberation Sans', sans-serif;color:#5e5e5e;">3</span>
<span class="t" style="left:13.40px;top:312.15px;font:400 14px/20px 'Liberation Sans', sans-serif;color:#5e5e5e;">4</span>
<span class="t" style="left:13.60px;top:332.15px;font:700 14px/20px 'Liberation Sans', sans-serif;color:#107c41;">5</span>
<span class="t" style="left:13.40px;top:352.15px;font:400 14px/20px 'Liberation Sans', sans-serif;color:#5e5e5e;">6</span>
<span class="t" style="left:13.40px;top:372.15px;font:400 14px/20px 'Liberation Sans', sans-serif;color:#5e5e5e;">7</span>
<span class="t" style="left:13.40px;top:392.15px;font:400 14px/20px 'Liberation Sans', sans-serif;color:#5e5e5e;">8</span>
<span class="t" style="left:13.40px;top:412.15px;font:400 14px/20px 'Liberation Sans', sans-serif;color:#5e5e5e;">9</span>
<span class="t" style="left:9.51px;top:432.15px;font:400 14px/20px 'Liberation Sans', sans-serif;color:#5e5e5e;letter-spacing:-0.6px;">10</span>
<span class="t" style="left:10.03px;top:452.15px;font:400 14px/20px 'Liberation Sans', sans-serif;color:#5e5e5e;letter-spacing:-0.6px;">11</span>
<span class="t" style="left:9.51px;top:472.15px;font:400 14px/20px 'Liberation Sans', sans-serif;color:#5e5e5e;letter-spacing:-0.6px;">12</span>
<span class="t" style="left:9.51px;top:492.15px;font:400 14px/20px 'Liberation Sans', sans-serif;color:#5e5e5e;letter-spacing:-0.6px;">13</span>
<span class="t" style="left:9.51px;top:512.15px;font:400 14px/20px 'Liberation Sans', sans-serif;color:#5e5e5e;letter-spacing:-0.6px;">14</span>
<span class="t" style="left:9.51px;top:532.15px;font:400 14px/20px 'Liberation Sans', sans-serif;color:#5e5e5e;letter-spacing:-0.6px;">15</span>
<span class="t" style="left:9.51px;top:552.15px;font:400 14px/20px 'Liberation Sans', sans-serif;color:#5e5e5e;letter-spacing:-0.6px;">16</span>
<span class="t" style="left:9.51px;top:572.15px;font:400 14px/20px 'Liberation Sans', sans-serif;color:#5e5e5e;letter-spacing:-0.6px;">17</span>
<span class="t" style="left:9.51px;top:592.15px;font:400 14px/20px 'Liberation Sans', sans-serif;color:#5e5e5e;letter-spacing:-0.6px;">18</span>
<span class="t" style="left:9.51px;top:612.15px;font:400 14px/20px 'Liberation Sans', sans-serif;color:#5e5e5e;letter-spacing:-0.6px;">19</span>
<span class="t" style="left:9.51px;top:632.15px;font:400 14px/20px 'Liberation Sans', sans-serif;color:#5e5e5e;letter-spacing:-0.6px;">20</span>
<span class="t" style="left:9.51px;top:652.15px;font:400 14px/20px 'Liberation Sans', sans-serif;color:#5e5e5e;letter-spacing:-0.6px;">21</span>
<span class="t" style="left:9.51px;top:672.15px;font:400 14px/20px 'Liberation Sans', sans-serif;color:#5e5e5e;letter-spacing:-0.6px;">22</span>
<span class="t" style="left:9.51px;top:692.15px;font:400 14px/20px 'Liberation Sans', sans-serif;color:#5e5e5e;letter-spacing:-0.6px;">23</span>
<span class="t" style="left:9.51px;top:712.15px;font:400 14px/20px 'Liberation Sans', sans-serif;color:#5e5e5e;letter-spacing:-0.6px;">24</span>
<span class="t" style="left:9.51px;top:732.15px;font:400 14px/20px 'Liberation Sans', sans-serif;color:#5e5e5e;letter-spacing:-0.6px;">25</span>
<span class="t" style="left:9.51px;top:752.15px;font:400 14px/20px 'Liberation Sans', sans-serif;color:#5e5e5e;letter-spacing:-0.6px;">26</span>
<span class="t" style="left:9.51px;top:772.15px;font:400 14px/20px 'Liberation Sans', sans-serif;color:#5e5e5e;letter-spacing:-0.6px;">27</span>
<span class="t" style="left:9.51px;top:792.15px;font:400 14px/20px 'Liberation Sans', sans-serif;color:#5e5e5e;letter-spacing:-0.6px;">28</span>
<span class="t" style="left:9.51px;top:812.15px;font:400 14px/20px 'Liberation Sans', sans-serif;color:#5e5e5e;letter-spacing:-0.6px;">29</span>
<span class="t" style="left:9.51px;top:832.15px;font:400 14px/20px 'Liberation Sans', sans-serif;color:#5e5e5e;letter-spacing:-0.6px;">30</span>
<span class="t" style="left:9.51px;top:852.15px;font:400 14px/20px 'Liberation Sans', sans-serif;color:#5e5e5e;letter-spacing:-0.6px;">31</span>
<span class="t" style="left:9.51px;top:872.15px;font:400 14px/20px 'Liberation Sans', sans-serif;color:#5e5e5e;letter-spacing:-0.6px;">32</span>
<span class="t" style="left:133.00px;top:252.79px;font:700 13.6px/19px 'Liberation Sans', sans-serif;color:#000;letter-spacing:-0.696px;text-decoration:underline;text-decoration-thickness:1px;text-underline-offset:2px;">Categories</span>
<span class="t" style="left:319.00px;top:252.79px;font:700 13.6px/19px 'Liberation Sans', sans-serif;color:#000;letter-spacing:-0.816px;text-decoration:underline;text-decoration-thickness:1px;text-underline-offset:2px;">Values</span>
<span class="t" style="left:470.50px;top:272.79px;font:700 13.6px/19px 'Liberation Sans', sans-serif;color:#000;letter-spacing:-0.490px;text-decoration:underline;text-decoration-thickness:1px;text-underline-offset:2px;">Date</span>
<span class="t" style="left:525.50px;top:272.79px;font:700 13.6px/19px 'Liberation Sans', sans-serif;color:#000;letter-spacing:-0.524px;text-decoration:underline;text-decoration-thickness:1px;text-underline-offset:2px;">Payment Number</span>
<span class="t" style="left:640.50px;top:272.79px;font:700 13.6px/19px 'Liberation Sans', sans-serif;color:#000;letter-spacing:-0.627px;text-decoration:underline;text-decoration-thickness:1px;text-underline-offset:2px;">Payment $</span>
<span class="t" style="left:713.50px;top:272.79px;font:700 13.6px/19px 'Liberation Sans', sans-serif;color:#000;letter-spacing:-0.230px;text-decoration:underline;text-decoration-thickness:1px;text-underline-offset:2px;">Interest</span>
<span class="t" style="left:771.00px;top:272.79px;font:700 13.6px/19px 'Liberation Sans', sans-serif;color:#000;letter-spacing:-0.740px;text-decoration:underline;text-decoration-thickness:1px;text-underline-offset:2px;">Principal</span>
<span class="t" style="left:835.00px;top:272.79px;font:700 13.6px/19px 'Liberation Sans', sans-serif;color:#000;letter-spacing:-0.663px;text-decoration:underline;text-decoration-thickness:1px;text-underline-offset:2px;">Extra Payment</span>
<span class="t" style="left:957.00px;top:272.79px;font:700 13.6px/19px 'Liberation Sans', sans-serif;color:#000;letter-spacing:-0.995px;text-decoration:underline;text-decoration-thickness:1px;text-underline-offset:2px;">Loan</span>
<span class="t c" style="left:39.00px;top:272.89px;font:400 13.3px/19px 'Liberation Sans', sans-serif;color:#000;">Loan Amount</span>
<span class="t c" style="left:39.00px;top:292.89px;font:400 13.3px/19px 'Liberation Sans', sans-serif;color:#000;">Annual Interest Rate</span>
<span class="t c" style="left:39.00px;top:312.89px;font:400 13.3px/19px 'Liberation Sans', sans-serif;color:#000;">Life Loan in Years</span>
<span class="t c" style="left:39.00px;top:332.89px;font:400 13.3px/19px 'Liberation Sans', sans-serif;color:#000;">Number of Payments per year</span>
<span class="t c" style="left:39.00px;top:352.89px;font:400 13.3px/19px 'Liberation Sans', sans-serif;color:#000;">Total Number of Payments</span>
<span class="t c" style="left:39.00px;top:372.89px;font:400 13.3px/19px 'Liberation Sans', sans-serif;color:#000;">Payment Per Period</span>
<span class="t c" style="left:39.00px;top:392.89px;font:400 13.3px/19px 'Liberation Sans', sans-serif;color:#000;">Sum of Payments</span>
<span class="t c" style="left:39.00px;top:412.89px;font:400 13.3px/19px 'Liberation Sans', sans-serif;color:#000;">Interest Cost</span>
<span class="t c" style="left:321.53px;top:272.89px;font:400 13.3px/19px 'Liberation Sans', sans-serif;color:#000;">$150,000</span>
<span class="t c" style="left:361.78px;top:292.89px;font:400 13.3px/19px 'Liberation Sans', sans-serif;color:#000;">3%</span>
<span class="t c" style="left:366.20px;top:312.89px;font:400 13.3px/19px 'Liberation Sans', sans-serif;color:#000;">30</span>
<span class="t c" style="left:366.20px;top:332.89px;font:400 13.3px/19px 'Liberation Sans', sans-serif;color:#000;">12</span>
<span class="t c" style="left:358.81px;top:352.89px;font:400 13.3px/19px 'Liberation Sans', sans-serif;color:#000;">360</span>
<span class="t c" style="left:328.92px;top:372.89px;font:400 13.3px/19px 'Liberation Sans', sans-serif;color:#000;">$632.41</span>
<span class="t c" style="left:303.05px;top:392.89px;font:400 13.3px/19px 'Liberation Sans', sans-serif;color:#000;">$227,666.18</span>
<span class="t c" style="left:310.44px;top:412.89px;font:400 13.3px/19px 'Liberation Sans', sans-serif;color:#000;">$77,666.18</span>
<span class="t c" style="left:934.55px;top:292.89px;font:400 13.3px/19px 'Liberation Sans', sans-serif;color:#000;">$150,000.00</span>
<span class="t c" style="left:768.08px;top:312.89px;font:400 13.3px/19px 'Liberation Sans', sans-serif;color:#ff0000;">($257.41)</span>
<span class="t c" style="left:465.23px;top:292.89px;font:400 13.3px/19px 'Liberation Sans', sans-serif;color:#000;letter-spacing:0.4px;margin-left:-2.6px;">2/1/2021</span>
<span class="t c" style="left:624.09px;top:292.89px;font:400 13.3px/19px 'Liberation Sans', sans-serif;color:#000;">0</span>
<span class="t c" style="left:465.23px;top:312.89px;font:400 13.3px/19px 'Liberation Sans', sans-serif;color:#000;letter-spacing:0.4px;margin-left:-2.6px;">3/1/2021</span>
<span class="t c" style="left:624.09px;top:312.89px;font:400 13.3px/19px 'Liberation Sans', sans-serif;color:#000;">1</span>
<span class="t c" style="left:664.83px;top:312.89px;font:400 13.3px/19px 'Liberation Sans', sans-serif;color:#000;">632.41</span>
<span class="t c" style="left:465.23px;top:332.89px;font:400 13.3px/19px 'Liberation Sans', sans-serif;color:#000;letter-spacing:0.4px;margin-left:-2.6px;">4/1/2021</span>
<span class="t c" style="left:624.09px;top:332.89px;font:400 13.3px/19px 'Liberation Sans', sans-serif;color:#000;">2</span>
<span class="t c" style="left:664.83px;top:332.89px;font:400 13.3px/19px 'Liberation Sans', sans-serif;color:#000;">632.41</span>
<span class="t c" style="left:465.23px;top:352.89px;font:400 13.3px/19px 'Liberation Sans', sans-serif;color:#000;letter-spacing:0.4px;margin-left:-2.6px;">5/1/2021</span>
<span class="t c" style="left:624.09px;top:352.89px;font:400 13.3px/19px 'Liberation Sans', sans-serif;color:#000;">3</span>
<span class="t c" style="left:664.83px;top:352.89px;font:400 13.3px/19px 'Liberation Sans', sans-serif;color:#000;">632.41</span>
<span class="t c" style="left:465.23px;top:372.89px;font:400 13.3px/19px 'Liberation Sans', sans-serif;color:#000;letter-spacing:0.4px;margin-left:-2.6px;">6/1/2021</span>
<span class="t c" style="left:624.09px;top:372.89px;font:400 13.3px/19px 'Liberation Sans', sans-serif;color:#000;">4</span>
<span class="t c" style="left:664.83px;top:372.89px;font:400 13.3px/19px 'Liberation Sans', sans-serif;color:#000;">632.41</span>
<span class="t c" style="left:465.23px;top:392.89px;font:400 13.3px/19px 'Liberation Sans', sans-serif;color:#000;letter-spacing:0.4px;margin-left:-2.6px;">7/1/2021</span>
<span class="t c" style="left:624.09px;top:392.89px;font:400 13.3px/19px 'Liberation Sans', sans-serif;color:#000;">5</span>
<span class="t c" style="left:664.83px;top:392.89px;font:400 13.3px/19px 'Liberation Sans', sans-serif;color:#000;">632.41</span>
<span class="t c" style="left:465.23px;top:412.89px;font:400 13.3px/19px 'Liberation Sans', sans-serif;color:#000;letter-spacing:0.4px;margin-left:-2.6px;">8/1/2021</span>
<span class="t c" style="left:624.09px;top:412.89px;font:400 13.3px/19px 'Liberation Sans', sans-serif;color:#000;">6</span>
<span class="t c" style="left:664.83px;top:412.89px;font:400 13.3px/19px 'Liberation Sans', sans-serif;color:#000;">632.41</span>
<span class="t c" style="left:465.23px;top:432.89px;font:400 13.3px/19px 'Liberation Sans', sans-serif;color:#000;letter-spacing:0.4px;margin-left:-2.6px;">9/1/2021</span>
<span class="t c" style="left:624.09px;top:432.89px;font:400 13.3px/19px 'Liberation Sans', sans-serif;color:#000;">7</span>
<span class="t c" style="left:664.83px;top:432.89px;font:400 13.3px/19px 'Liberation Sans', sans-serif;color:#000;">632.41</span>
<span class="t c" style="left:457.84px;top:452.89px;font:400 13.3px/19px 'Liberation Sans', sans-serif;color:#000;letter-spacing:0.4px;margin-left:-2.6px;">10/1/2021</span>
<span class="t c" style="left:624.09px;top:452.89px;font:400 13.3px/19px 'Liberation Sans', sans-serif;color:#000;">8</span>
<span class="t c" style="left:664.83px;top:452.89px;font:400 13.3px/19px 'Liberation Sans', sans-serif;color:#000;">632.41</span>
<span class="t c" style="left:458.83px;top:472.89px;font:400 13.3px/19px 'Liberation Sans', sans-serif;color:#000;letter-spacing:0.4px;margin-left:-2.6px;">11/1/2021</span>
<span class="t c" style="left:624.09px;top:472.89px;font:400 13.3px/19px 'Liberation Sans', sans-serif;color:#000;">9</span>
<span class="t c" style="left:664.83px;top:472.89px;font:400 13.3px/19px 'Liberation Sans', sans-serif;color:#000;">632.41</span>
<span class="t c" style="left:457.84px;top:492.89px;font:400 13.3px/19px 'Liberation Sans', sans-serif;color:#000;letter-spacing:0.4px;margin-left:-2.6px;">12/1/2021</span>
<span class="t c" style="left:616.70px;top:492.89px;font:400 13.3px/19px 'Liberation Sans', sans-serif;color:#000;">10</span>
<span class="t c" style="left:664.83px;top:492.89px;font:400 13.3px/19px 'Liberation Sans', sans-serif;color:#000;">632.41</span>
<span class="t c" style="left:465.23px;top:512.89px;font:400 13.3px/19px 'Liberation Sans', sans-serif;color:#000;letter-spacing:0.4px;margin-left:-2.6px;">1/1/2022</span>
<span class="t c" style="left:617.69px;top:512.89px;font:400 13.3px/19px 'Liberation Sans', sans-serif;color:#000;">11</span>
<span class="t c" style="left:664.83px;top:512.89px;font:400 13.3px/19px 'Liberation Sans', sans-serif;color:#000;">632.41</span>
<span class="t c" style="left:465.23px;top:532.89px;font:400 13.3px/19px 'Liberation Sans', sans-serif;color:#000;letter-spacing:0.4px;margin-left:-2.6px;">2/1/2022</span>
<span class="t c" style="left:616.70px;top:532.89px;font:400 13.3px/19px 'Liberation Sans', sans-serif;color:#000;">12</span>
<span class="t c" style="left:664.83px;top:532.89px;font:400 13.3px/19px 'Liberation Sans', sans-serif;color:#000;">632.41</span>
<span class="t c" style="left:465.23px;top:552.89px;font:400 13.3px/19px 'Liberation Sans', sans-serif;color:#000;letter-spacing:0.4px;margin-left:-2.6px;">3/1/2022</span>
<span class="t c" style="left:616.70px;top:552.89px;font:400 13.3px/19px 'Liberation Sans', sans-serif;color:#000;">13</span>
<span class="t c" style="left:664.83px;top:552.89px;font:400 13.3px/19px 'Liberation Sans', sans-serif;color:#000;">632.41</span>
<span class="t c" style="left:465.23px;top:572.89px;font:400 13.3px/19px 'Liberation Sans', sans-serif;color:#000;letter-spacing:0.4px;margin-left:-2.6px;">4/1/2022</span>
<span class="t c" style="left:616.70px;top:572.89px;font:400 13.3px/19px 'Liberation Sans', sans-serif;color:#000;">14</span>
<span class="t c" style="left:664.83px;top:572.89px;font:400 13.3px/19px 'Liberation Sans', sans-serif;color:#000;">632.41</span>
<span class="t c" style="left:465.23px;top:592.89px;font:400 13.3px/19px 'Liberation Sans', sans-serif;color:#000;letter-spacing:0.4px;margin-left:-2.6px;">5/1/2022</span>
<span class="t c" style="left:616.70px;top:592.89px;font:400 13.3px/19px 'Liberation Sans', sans-serif;color:#000;">15</span>
<span class="t c" style="left:664.83px;top:592.89px;font:400 13.3px/19px 'Liberation Sans', sans-serif;color:#000;">632.41</span>
<span class="t c" style="left:465.23px;top:612.89px;font:400 13.3px/19px 'Liberation Sans', sans-serif;color:#000;letter-spacing:0.4px;margin-left:-2.6px;">6/1/2022</span>
<span class="t c" style="left:616.70px;top:612.89px;font:400 13.3px/19px 'Liberation Sans', sans-serif;color:#000;">16</span>
<span class="t c" style="left:664.83px;top:612.89px;font:400 13.3px/19px 'Liberation Sans', sans-serif;color:#000;">632.41</span>
<span class="t c" style="left:465.23px;top:632.89px;font:400 13.3px/19px 'Liberation Sans', sans-serif;color:#000;letter-spacing:0.4px;margin-left:-2.6px;">7/1/2022</span>
<span class="t c" style="left:616.70px;top:632.89px;font:400 13.3px/19px 'Liberation Sans', sans-serif;color:#000;">17</span>
<span class="t c" style="left:664.83px;top:632.89px;font:400 13.3px/19px 'Liberation Sans', sans-serif;color:#000;">632.41</span>
<span class="t c" style="left:465.23px;top:652.89px;font:400 13.3px/19px 'Liberation Sans', sans-serif;color:#000;letter-spacing:0.4px;margin-left:-2.6px;">8/1/2022</span>
<span class="t c" style="left:616.70px;top:652.89px;font:400 13.3px/19px 'Liberation Sans', sans-serif;color:#000;">18</span>
<span class="t c" style="left:664.83px;top:652.89px;font:400 13.3px/19px 'Liberation Sans', sans-serif;color:#000;">632.41</span>
<span class="t c" style="left:465.23px;top:672.89px;font:400 13.3px/19px 'Liberation Sans', sans-serif;color:#000;letter-spacing:0.4px;margin-left:-2.6px;">9/1/2022</span>
<span class="t c" style="left:616.70px;top:672.89px;font:400 13.3px/19px 'Liberation Sans', sans-serif;color:#000;">19</span>
<span class="t c" style="left:664.83px;top:672.89px;font:400 13.3px/19px 'Liberation Sans', sans-serif;color:#000;">632.41</span>
<span class="t c" style="left:457.84px;top:692.89px;font:400 13.3px/19px 'Liberation Sans', sans-serif;color:#000;letter-spacing:0.4px;margin-left:-2.6px;">10/1/2022</span>
<span class="t c" style="left:616.70px;top:692.89px;font:400 13.3px/19px 'Liberation Sans', sans-serif;color:#000;">20</span>
<span class="t c" style="left:664.83px;top:692.89px;font:400 13.3px/19px 'Liberation Sans', sans-serif;color:#000;">632.41</span>
<span class="t c" style="left:458.83px;top:712.89px;font:400 13.3px/19px 'Liberation Sans', sans-serif;color:#000;letter-spacing:0.4px;margin-left:-2.6px;">11/1/2022</span>
<span class="t c" style="left:616.70px;top:712.89px;font:400 13.3px/19px 'Liberation Sans', sans-serif;color:#000;">21</span>
<span class="t c" style="left:664.83px;top:712.89px;font:400 13.3px/19px 'Liberation Sans', sans-serif;color:#000;">632.41</span>
<span class="t c" style="left:457.84px;top:732.89px;font:400 13.3px/19px 'Liberation Sans', sans-serif;color:#000;letter-spacing:0.4px;margin-left:-2.6px;">12/1/2022</span>
<span class="t c" style="left:616.70px;top:732.89px;font:400 13.3px/19px 'Liberation Sans', sans-serif;color:#000;">22</span>
<span class="t c" style="left:664.83px;top:732.89px;font:400 13.3px/19px 'Liberation Sans', sans-serif;color:#000;">632.41</span>
<span class="t c" style="left:465.23px;top:752.89px;font:400 13.3px/19px 'Liberation Sans', sans-serif;color:#000;letter-spacing:0.4px;margin-left:-2.6px;">1/1/2023</span>
<span class="t c" style="left:616.70px;top:752.89px;font:400 13.3px/19px 'Liberation Sans', sans-serif;color:#000;">23</span>
<span class="t c" style="left:664.83px;top:752.89px;font:400 13.3px/19px 'Liberation Sans', sans-serif;color:#000;">632.41</span>
<span class="t c" style="left:465.23px;top:772.89px;font:400 13.3px/19px 'Liberation Sans', sans-serif;color:#000;letter-spacing:0.4px;margin-left:-2.6px;">2/1/2023</span>
<span class="t c" style="left:616.70px;top:772.89px;font:400 13.3px/19px 'Liberation Sans', sans-serif;color:#000;">24</span>
<span class="t c" style="left:664.83px;top:772.89px;font:400 13.3px/19px 'Liberation Sans', sans-serif;color:#000;">632.41</span>
<span class="t c" style="left:465.23px;top:792.89px;font:400 13.3px/19px 'Liberation Sans', sans-serif;color:#000;letter-spacing:0.4px;margin-left:-2.6px;">3/1/2023</span>
<span class="t c" style="left:616.70px;top:792.89px;font:400 13.3px/19px 'Liberation Sans', sans-serif;color:#000;">25</span>
<span class="t c" style="left:664.83px;top:792.89px;font:400 13.3px/19px 'Liberation Sans', sans-serif;color:#000;">632.41</span>
<span class="t c" style="left:465.23px;top:812.89px;font:400 13.3px/19px 'Liberation Sans', sans-serif;color:#000;letter-spacing:0.4px;margin-left:-2.6px;">4/1/2023</span>
<span class="t c" style="left:616.70px;top:812.89px;font:400 13.3px/19px 'Liberation Sans', sans-serif;color:#000;">26</span>
<span class="t c" style="left:664.83px;top:812.89px;font:400 13.3px/19px 'Liberation Sans', sans-serif;color:#000;">632.41</span>
<span class="t c" style="left:465.23px;top:832.89px;font:400 13.3px/19px 'Liberation Sans', sans-serif;color:#000;letter-spacing:0.4px;margin-left:-2.6px;">5/1/2023</span>
<span class="t c" style="left:616.70px;top:832.89px;font:400 13.3px/19px 'Liberation Sans', sans-serif;color:#000;">27</span>
<span class="t c" style="left:664.83px;top:832.89px;font:400 13.3px/19px 'Liberation Sans', sans-serif;color:#000;">632.41</span>
<span class="t c" style="left:465.23px;top:852.89px;font:400 13.3px/19px 'Liberation Sans', sans-serif;color:#000;letter-spacing:0.4px;margin-left:-2.6px;">6/1/2023</span>
<span class="t c" style="left:616.70px;top:852.89px;font:400 13.3px/19px 'Liberation Sans', sans-serif;color:#000;">28</span>
<span class="t c" style="left:664.83px;top:852.89px;font:400 13.3px/19px 'Liberation Sans', sans-serif;color:#000;">632.41</span>
<span class="t c" style="left:465.23px;top:872.89px;font:400 13.3px/19px 'Liberation Sans', sans-serif;color:#000;letter-spacing:0.4px;margin-left:-2.6px;">7/1/2023</span>
<span class="t c" style="left:616.70px;top:872.89px;font:400 13.3px/19px 'Liberation Sans', sans-serif;color:#000;">29</span>
<span class="t c" style="left:664.83px;top:872.89px;font:400 13.3px/19px 'Liberation Sans', sans-serif;color:#000;">632.41</span>
<div class="b" style="left:764px;top:330px;width:65px;height:23px;border:2px solid #1e6e42;"></div>
<div class="b" style="left:825px;top:349px;width:6px;height:5px;background:#fff;"></div>
<div class="b" style="left:825px;top:349px;width:5px;height:6px;background:#fff;"></div>
<div class="b" style="left:826px;top:350px;width:4px;height:4px;background:#1e6e42;"></div>
<svg class="b" style="left:826px;top:350px;" width="5" height="5" viewBox="0 0 5 5" fill="none"><rect x="0" y="0" width="4.3" height="4.2" fill="#1e6e42"/></svg>
<div class="b" style="left:0px;top:889px;width:1280px;height:71px;background:#f4f4f4;"></div>
<div class="b" style="left:1264px;top:252px;width:16px;height:637px;background:#f1f1f1;"></div>
<div class="b" style="left:1266px;top:267px;width:11px;height:38px;background:#c1c1c1;"></div>
<svg class="b" style="left:1267px;top:257px;" width="9" height="6" viewBox="0 0 9 6" fill="none"><path d="M4.4 0.6L8.2 5H0.6Z" fill="#a3a3a3"/></svg>
<svg class="b" style="left:1267px;top:878px;" width="9" height="6" viewBox="0 0 9 6" fill="none"><path d="M4.4 5.2L8.2 0.8H0.6Z" fill="#505050"/></svg>
<div class="b" style="left:37px;top:889px;width:1227px;height:15px;background:#f0f0f0;"></div>
<div class="b" style="left:52px;top:891px;width:382px;height:11px;background:#c1c1c1;"></div>
<svg class="b" style="left:42px;top:893px;" width="5" height="8" viewBox="0 0 5 8" fill="none"><path d="M4.4 0V7L0.2 3.5Z" fill="#7d7d7d"/></svg>
<svg class="b" style="left:1255px;top:893px;" width="5" height="8" viewBox="0 0 5 8" fill="none"><path d="M0 0V7L4 3.5Z" fill="#505050"/></svg>
<div class="b" style="left:1264px;top:889px;width:16px;height:15px;background:#dcdcdc;"></div>
<svg class="b" style="left:12px;top:913px;" width="8" height="12" viewBox="0 0 8 12" fill="none"><path d="M7 0.8L1.2 6L7 11.2" stroke="#c8c6c4" stroke-width="1.1"/></svg>
<svg class="b" style="left:44px;top:913px;" width="8" height="12" viewBox="0 0 8 12" fill="none"><path d="M1 0.8L6.8 6L1 11.2" stroke="#c8c6c4" stroke-width="1.1"/></svg>
<svg class="b" style="left:74px;top:915px;" width="13" height="9" viewBox="0 0 13 9" fill="none"><path d="M0 0.5H12.5M0 4.5H12.5M0 8.5H12.5" stroke="#323130" stroke-width="1"/></svg>
<span class="t" style="left:105.00px;top:907.48px;font:400 14.5px/20px 'Liberation Sans', sans-serif;color:#3b3a39;letter-spacing:-0.794px;-webkit-text-stroke:0.45px #3b3a39;">Sheet1</span>
<div class="b" style="left:105px;top:933px;width:43px;height:3px;background:#107c41;"></div>
<svg class="b" style="left:167px;top:913px;" width="12" height="13" viewBox="0 0 12 13" fill="none"><path d="M5.5 0V12M0 6.5H11.5" stroke="#323130" stroke-width="1"/></svg>
<div class="b" style="left:0px;top:936px;width:1280px;height:22px;background:#fff;border-top:1px solid #e1dfdd;"></div>
<div class="b" style="left:0px;top:958px;width:1280px;height:1px;background:rgba(20,20,20,0.4);"></div>
<div class="b" style="left:0px;top:959px;width:1280px;height:1px;background:#141414;"></div>
<div class="b" style="left:1278px;top:34px;width:1px;height:925px;background:rgba(32,33,36,0.5);"></div>
<div class="b" style="left:1279px;top:34px;width:1px;height:926px;background:#202124;"></div>
<span class="t" style="left:14.50px;top:940.02px;font:400 11.5px/16px 'Liberation Sans', sans-serif;color:#444;letter-spacing:-0.163px;">Calculation Mode: Automatic</span>
<span class="t" style="left:174.00px;top:940.02px;font:400 11.5px/16px 'Liberation Sans', sans-serif;color:#444;letter-spacing:-0.293px;">Workbook Statistics</span>
<span class="t" style="left:1024.00px;top:940.02px;font:400 11.5px/16px 'Liberation Sans', sans-serif;color:#444;letter-spacing:-0.279px;">Give Feedback to Microsoft</span>
<span class="t" style="left:1217.50px;top:940.02px;font:400 11.5px/16px 'Liberation Sans', sans-serif;color:#444;letter-spacing:-0.974px;">100%</span>
<svg class="b" style="left:977px;top:945px;" width="8" height="5" viewBox="0 0 8 5" fill="none"><path d="M0.8 0.8L4 4L7.2 0.8" stroke="#323130" stroke-width="1.2"/></svg>
<div class="b" style="left:1197px;top:948px;width:11px;height:1px;background:#323130;"></div>
<svg class="b" style="left:1251px;top:943px;" width="11" height="11" viewBox="0 0 11 11" fill="none"><path d="M5.5 0V11M0 5.5H11" stroke="#323130" stroke-width="1.1"/></svg>
</div>
</body></html>
